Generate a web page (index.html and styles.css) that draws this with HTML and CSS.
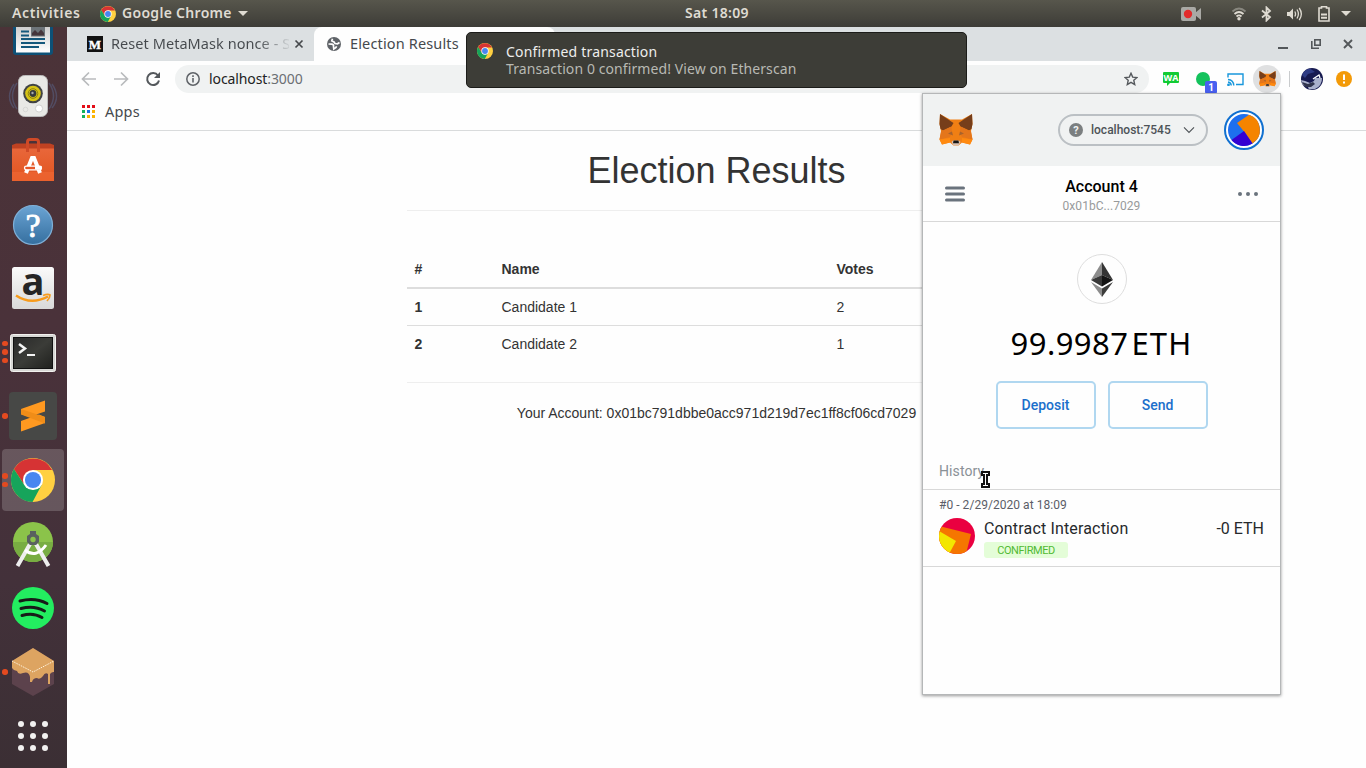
FILE: index.html
```html
<!DOCTYPE html>
<html lang="en">
<head>
<meta charset="utf-8">
<title>Election Results</title>
<link rel="stylesheet" href="styles.css">
</head>
<body>
<svg class="defs" width="0" height="0" aria-hidden="true">
  <defs>
    <linearGradient id="paper" x1="0" y1="0" x2="0" y2="1"><stop offset="0" stop-color="#aaa"/><stop offset="1" stop-color="#fff"/></linearGradient>
    <linearGradient id="bag" x1="0" y1="0" x2="0" y2="1"><stop offset="0" stop-color="#e9693d"/><stop offset="1" stop-color="#e2541f"/></linearGradient>
    <linearGradient id="help" x1="0" y1="0" x2="0" y2="1"><stop offset="0" stop-color="#6ba4d4"/><stop offset="1" stop-color="#356f9f"/></linearGradient>
    <linearGradient id="white" x1="0" y1="0" x2="0" y2="1"><stop offset="0" stop-color="#fafafa"/><stop offset="1" stop-color="#d9d9d9"/></linearGradient>
    <linearGradient id="term" x1="0" y1="0" x2="1" y2="1"><stop offset="0" stop-color="#292929"/><stop offset=".5" stop-color="#3b3c38"/><stop offset="1" stop-color="#1f201d"/></linearGradient>
    <clipPath id="tx-circle"><circle cx="18" cy="18" r="18"/></clipPath>
    <symbol id="chrome" viewBox="0 0 48 48">
      <circle cx="24" cy="24" r="24" fill="#ffd041"/>
      <path d="M3.2 12A24 24 0 0 1 44.8 13.2H24L14.6 29.4z" fill="#d63334"/>
      <path d="M3.2 12A24 24 0 0 0 23.5 48L33.4 29.4 24 34.8 14.6 29.4z" fill="#16a45b"/>
      <circle cx="24" cy="24" r="11" fill="#fff"/><circle cx="24" cy="24" r="8.8" fill="#4886f0"/>
    </symbol>
    <symbol id="fox" viewBox="0 0 34 32">
      <path d="M1 0L11 5.500H23L33 0 33.500 10 32 17 33.500 25.500 31 30.500 23 28.500 19.500 31.500H14.500L11 28.500 3 30.500 .5 25.500 2 17 .5 10z" fill="#f07f14"/>
      <path d="M1 0L14.500 9 12.500 12.500 4 16.500 1.500 15 .5 10zM33 0L19.500 9 21.500 12.500 30 16.500 32.500 15 33.500 10z" fill="#763e1a"/>
      <path d="M2.500 16L4 16.500 12.500 12.500 13 19 11 23 .5 25.500zM31.500 16L30 16.500 21.500 12.500 21 19 23 23 33.500 25.500z" fill="#e4761b"/>
      <path d="M9 19.500L13 17.500 14 21.500zM25 19.500L21 17.500 20 21.500z" fill="#a9632c"/>
      <path d="M.5 25.500L11 24 11 28.500 3 30.500zM33.500 25.500L23 24 23 28.500 31 30.500z" fill="#ff8a10"/>
      <path d="M12.500 28L14 26.500H20L21.500 28 19.500 31.500H14.500z" fill="#d7c1b3"/>
      <path d="M14.500 26.500H19.500L20 29.300H14z" fill="#161616"/>
    </symbol>
  </defs>
</svg>

<header class="panel">
  <span class="panel-activities">Activities</span>
  <span class="panel-app"><svg width="16" height="16"><use href="#chrome"/></svg><b>Google Chrome</b><i class="caret"></i></span>
  <span class="panel-clock">Sat 18:09</span>
  <div class="tray">
    <svg width="21" height="14" viewBox="0 0 21 14"><rect width="15" height="14" rx="2" fill="#a9a9a5"/><path d="M14 6L20 1V13L14 8z" fill="#a9a9a5"/><circle cx="7" cy="7" r="4.200" fill="#e22b2b"/></svg>
    <svg class="wifi" width="16" height="14" viewBox="0 0 16 14" fill="none" stroke-width="1.800"><path d="M1.500 4.500Q8-1.500 14.500 4.500" stroke="#88877f"/><path d="M3.500 7Q8 3 12.500 7M5.500 9.500Q8 7.300 10.500 9.500" stroke="#dfdbd2"/><circle cx="8" cy="11.800" r="1.700" fill="#dfdbd2"/></svg>
    <svg class="bluetooth" width="11" height="16" viewBox="0 0 11 16" fill="none" stroke="#dfdbd2" stroke-width="1.800"><path d="M1 4.500L9 11 5.500 14.500V1.500L9 5 1 11.500"/></svg>
    <svg class="sound" width="17" height="14" viewBox="0 0 17 14"><path d="M1 5H3.500L7 1.500V12.500L3.500 9H1z" fill="#dfdbd2"/><path d="M8.800 4.500Q10.300 7 8.800 9.500M11 2.500Q13.800 7 11 11.500M13.200 1Q17.500 7 13.200 13" fill="none" stroke="#dfdbd2" stroke-width="1.300"/></svg>
    <svg class="battery" width="12" height="16" viewBox="0 0 12 16"><path d="M3.500 2V.8H8.500V2H11V15H1V2z" fill="none" stroke="#dfdbd2" stroke-width="1.600"/><path d="M3 8.500H9M3 11.800H9" stroke="#dfdbd2" stroke-width="2"/></svg>
    <i class="caret"></i>
  </div>
</header>

<div class="desktop">
  <nav class="dock">
    <div class="dock-list">
      <div class="slot"><svg width="40" height="48" viewBox="0 0 40 48"><rect width="40" height="47" rx="3" fill="#0d5177"/><rect x="3" width="34" height="44.500" fill="url(#paper)"/><path d="M8 23.500H16M8 27.500H16M8 31H32M8 35H32M8 39H26" stroke="#15587c" stroke-width="1.800"/><rect x="18" y="18" width="14" height="10.500" fill="#6d7479"/><path d="M19 27.500V25L22 22 25 25 28 21.500 31 25V27.500z" fill="#45353b"/></svg></div>
      <div class="slot"><svg width="48" height="48" viewBox="0 0 48 48"><path d="M8 11Q-1 24 8 37M40 11Q49 24 40 37M5 12Q-4 25 5 36M43 12Q52 25 43 36" fill="none" stroke="#5b6a95" stroke-width="1.500" opacity=".45"/><rect x="9.500" y="3.500" width="29" height="41" rx="6" fill="#e9e9e6" stroke="#bbb"/><circle cx="24" cy="21.500" r="9.800" fill="#404344"/><circle cx="24" cy="21.500" r="7.800" fill="#d7c415"/><circle cx="24" cy="21.500" r="4.800" fill="none" stroke="#8c8112"/><circle cx="24" cy="21.500" r="3.400" fill="#373a3e"/><circle cx="23.500" cy="21" r="1.200" fill="#aaa"/><circle cx="30" cy="36.500" r="3.600" fill="#fff" stroke="#d2d2d0"/><circle cx="16.500" cy="37.500" r="2.300" fill="none" stroke="#d8d8d6"/></svg></div>
      <div class="slot"><svg width="42" height="44" viewBox="0 0 42 44"><path d="M0 7H42V43H0z" fill="url(#bag)"/><path d="M0 7L4 5.500H38L42 7V10.500H0z" fill="#bf4222"/><path d="M15.500 14V4Q15.500 1.500 18 1.500H24Q26.500 1.500 26.500 4V14" fill="none" stroke="#cf4a27" stroke-width="3"/><path d="M0 34H42V43H0z" fill="#f26b38" opacity=".55"/><path d="M14 35L20 20H22L28 35" fill="none" stroke="#fff" stroke-width="4"/><rect x="12.500" y="28.200" width="17" height="3.600" rx="1.800" fill="#e65729" stroke="#fff" stroke-width="1.300"/><path d="M23 28H29.500V31.500H23z" fill="#fff"/></svg></div>
      <div class="slot nudge"><svg width="42" height="42" viewBox="0 0 42 42"><circle cx="21" cy="21" r="19.500" fill="url(#help)" stroke="#7fb0d8" stroke-width="1.200"/><text x="21" y="33" text-anchor="middle" class="glyph-help">?</text></svg></div>
      <div class="slot"><svg width="42" height="42" viewBox="0 0 42 42"><rect width="42" height="42" rx="2.500" fill="url(#white)"/><text x="21" y="27.500" text-anchor="middle" class="glyph-amazon">a</text><path d="M4 28.500Q19 38.500 36 29.500" fill="none" stroke="#f79b1c" stroke-width="2.500"/><path d="M31 28.500Q36 26.500 38 28 38 31 35 34" fill="none" stroke="#f79b1c" stroke-width="1.700"/></svg></div>
      <div class="slot nudge"><i class="dots"><b></b><b></b><b></b></i><svg width="46" height="38" viewBox="0 0 46 38"><rect x=".5" y=".5" width="45" height="37" rx="2" fill="#d7d7d4" stroke="#f2f2ef"/><rect x="3.500" y="3.500" width="39" height="31" fill="url(#term)" stroke="#111"/><path d="M9 10L15 14.500 9 19" fill="none" stroke="#f4f4f4" stroke-width="2.500"/><path d="M17 21H25" stroke="#f4f4f4" stroke-width="2"/></svg></div>
      <div class="slot"><i class="dots"><b></b></i><svg width="48" height="48" viewBox="0 0 48 48"><rect width="48" height="48" rx="4" fill="#474846"/><path d="M12 17L36 8.500V19.500L20 25 12 22z" fill="#ff9920"/><path d="M12 29L30 22.500 36 25V31L12 39.500z" fill="#ff9920"/><path d="M12 17L36 25V31.500L12 22.500z" fill="#f08d18"/></svg></div>
      <div class="slot active"><i class="dots"><b></b><b></b></i><svg width="44" height="44"><use href="#chrome"/></svg></div>
      <div class="slot"><svg width="42" height="46" viewBox="0 0 42 46"><circle cx="21" cy="21" r="20" fill="#8bc34a"/><path d="M1 21A20 20 0 0 0 41 21z" fill="#78ad42"/><path d="M18 23L5.500 45M24 23L36.500 45" stroke="#eee" stroke-width="4"/><path d="M13 29Q24 38 34 24" fill="none" stroke="#fff" stroke-width="3"/><path d="M18 10H24V13L27 15V21L24 24H18L15 21V15L18 13z" fill="#59615f"/><circle cx="21" cy="18.500" r="2.700" fill="#8bc34a"/></svg></div>
      <div class="slot"><svg width="42" height="42" viewBox="0 0 42 42"><circle cx="21" cy="21" r="21" fill="#23ed60"/><path d="M8 14Q23 10 35 16.500M9 21.500Q22 18 32.500 24M10 28.500Q21 25 30 30.500" fill="none" stroke="#171b18" stroke-linecap="round" stroke-width="3"/></svg></div>
      <div class="slot"><i class="dots"><b></b></i><svg width="42" height="48" viewBox="0 0 42 48"><path d="M0 13L21 0 42 13V36L21 48 0 36z" fill="#5c424c"/><path d="M0 13L21 0 42 13V24Q40 23.500 38 26V36H36V26Q33 24 31 28 28 32 25 30 21 30 20 34H18V29Q17 23 11 25 6 27 5 23 2 23 0 20z" fill="#dda461"/><path d="M0 13L21 24 42 13M21 0" fill="none" stroke="#fff2dc" stroke-dasharray="1.500 1"/></svg></div>
      <div class="slot"><svg width="32" height="32" viewBox="0 0 32 32" fill="#f2f1f0"><circle cx="4" cy="4" r="3"/><circle cx="16" cy="4" r="3"/><circle cx="28" cy="4" r="3"/><circle cx="4" cy="16" r="3"/><circle cx="16" cy="16" r="3"/><circle cx="28" cy="16" r="3"/><circle cx="4" cy="28" r="3"/><circle cx="16" cy="28" r="3"/><circle cx="28" cy="28" r="3"/></svg></div>
    </div>
  </nav>

  <main class="browser">
    <div class="tabstrip">
      <div class="tab tab-back">
        <svg width="16" height="16" viewBox="0 0 16 16"><rect width="16" height="16" fill="#111"/><text x="8" y="12.500" text-anchor="middle" class="glyph-medium">M</text></svg>
        <span class="tab-title tab-fade">Reset MetaMask nonce - S</span>
        <svg class="tab-close" width="10" height="10" viewBox="0 0 10 10"><path d="M1.500 1.500L8.500 8.500M8.500 1.500L1.500 8.500" stroke="#46494c" stroke-width="1.700"/></svg>
      </div>
      <div class="tab tab-front">
        <svg width="14" height="14" viewBox="0 0 14 14"><circle cx="7" cy="7" r="7" fill="#5f6368"/><path d="M1.500 7L4.500 7.200Q7 7.500 6.500 9.500L6.800 12 9 10.500 9.500 9.200M5.500 1.800L4.800 3.800 7 5 8 6.500 10.500 6.800 12.500 5.500" fill="none" stroke="#fefefe" stroke-width="1.700"/></svg>
        <span class="tab-title tab-title-front">Election Results</span>
      </div>
      <div class="window-buttons">
        <svg width="10" height="10" viewBox="0 0 10 10"><path d="M0 9H10" stroke="#53575a" stroke-width="2"/></svg>
        <svg width="10" height="10" viewBox="0 0 10 10" fill="none" stroke="#53575a"><rect x="3.800" y=".8" width="5.400" height="5.400" stroke-width="1.600"/><path d="M.8 2V9.200H8" stroke-width="1.600"/></svg>
        <svg width="10" height="10" viewBox="0 0 10 10"><path d="M1 1L9 9M9 1L1 9" stroke="#53575a" stroke-width="1.900"/></svg>
      </div>
    </div>

    <div class="toolbar">
      <div class="nav-buttons">
        <svg width="16" height="16" viewBox="0 0 16 16" fill="none" stroke="#b9bbbd" stroke-width="1.700"><path d="M15 8H2M8 1.500L1.500 8 8 14.500"/></svg>
        <svg width="16" height="16" viewBox="0 0 16 16" fill="none" stroke="#b9bbbd" stroke-width="1.700"><path d="M1 8H14M8 1.500L14.500 8 8 14.500"/></svg>
        <svg width="16" height="16" viewBox="0 0 16 16"><path d="M13 4.500A6 6 0 1 0 14 9.500" fill="none" stroke="#54585c" stroke-width="2"/><path d="M15 1V7H9z" fill="#54585c"/></svg>
      </div>
      <div class="omnibox">
        <svg width="14" height="14" viewBox="0 0 14 14"><circle cx="7" cy="7" r="6.200" fill="none" stroke="#5f6368" stroke-width="1.500"/><path d="M7 6V10.500M7 3.300V4.900" stroke="#5f6368" stroke-width="1.600"/></svg>
        <span class="url">localhost<em>:3000</em></span>
        <svg class="star" width="14" height="14" viewBox="0 0 14 14"><path d="M7 1.300L8.700 5.100 13 5.500 9.800 8.300 10.700 12.500 7 10.300 3.300 12.500 4.200 8.300 1 5.500 5.300 5.100z" fill="none" stroke="#54585c" stroke-width="1.400"/></svg>
      </div>
      <div class="extensions">
        <svg width="16" height="14" viewBox="0 0 16 14"><path d="M1 0H15Q16 0 16 1V10Q16 11 15 11H7L4 14V11H1Q0 11 0 10V1Q0 0 1 0z" fill="#12cb34"/><text x="8" y="8.800" text-anchor="middle" class="glyph-wa">WA</text></svg>
        <div class="hangouts"><span class="badge">1</span></div>
        <svg class="cast" width="17" height="13" viewBox="0 0 17 13" fill="none" stroke="#1897dc" stroke-width="1.400"><path d="M1 4.500V1H16V11.500H9M1 6.500Q6.500 7 6.800 12.500M1 9Q4 9.500 4.300 12.500"/><circle cx="1.500" cy="11.800" r=".7"/></svg>
        <div class="fox-button"><svg width="17" height="16"><use href="#fox"/></svg></div>
        <i class="divider"></i>
        <svg class="profile" width="22" height="22" viewBox="0 0 22 22"><circle cx="11" cy="11" r="11" fill="#171a50"/><path d="M1 7A11 11 0 0 1 9 .5L14 4 7 6 4 10z" fill="#2f3c84"/><path d="M0 12L4 13 9 15 13 13 14 10 21 10A11 11 0 0 1 14 21L8 21.500 7 19 2 17z" fill="#a9b0cc"/><path d="M1 14L7 16 12 14 14 16 10 19 5 19Q2 17 1 14z" fill="#30344d"/><path d="M12 11L18 7 19 10" fill="none" stroke="#fff" stroke-width="1.300"/></svg>
        <svg class="alert" width="16" height="16" viewBox="0 0 16 16"><circle cx="8" cy="8" r="8" fill="#f39a08"/><path d="M8 3.500V9M8 10.500V12.500" stroke="#fff" stroke-width="2"/></svg>
      </div>
    </div>

    <div class="bookmarks">
      <svg width="13" height="13" viewBox="0 0 13 13"><path d="M0 0h3v3H0zM5 0h3v3H5zM10 0h3v3h-3z" fill="#e30d17"/><path d="M0 5h3v3H0zM0 10h3v3H0z" fill="#14b25b"/><path d="M5 5h3v3H5z" fill="#1a73e8"/><path d="M10 5h3v3h-3zM5 10h3v3H5zM10 10h3v3h-3z" fill="#fbb300"/></svg>
      <span>Apps</span>
    </div>

    <section class="page">
      <h1>Election Results</h1>
      <hr>
      <br>
      <table>
        <thead><tr><th class="col-id">#</th><th class="col-name">Name</th><th>Votes</th></tr></thead>
        <tbody>
          <tr><th>1</th><td>Candidate 1</td><td>2</td></tr>
          <tr><th>2</th><td>Candidate 2</td><td>1</td></tr>
        </tbody>
      </table>
      <hr>
      <p>Your Account: 0x01bc791dbbe0acc971d219d7ec1ff8cf06cd7029</p>
    </section>
  </main>
</div>

<aside class="wallet">
  <div class="wallet-top">
    <svg width="34" height="32"><use href="#fox"/></svg>
    <div class="network">
      <svg width="14" height="14" viewBox="0 0 14 14"><circle cx="7" cy="7" r="7" fill="#7b7f80"/><text x="7" y="11" text-anchor="middle" class="glyph-q">?</text></svg>
      <span>localhost:7545</span>
      <svg width="12" height="8" viewBox="0 0 12 8"><path d="M1 1.300L6 6.500 11 1.300" fill="none" stroke="#4d5357" stroke-width="1.100"/></svg>
    </div>
    <svg class="identicon" width="40" height="40" viewBox="0 0 40 40"><circle cx="20" cy="20" r="19" fill="#fefefe" stroke="#1070d0" stroke-width="2"/><circle cx="20" cy="20" r="16" fill="#1d6fee"/><path d="M13 13L25 4.800A16 16 0 0 1 28.500 33.500L20 21.500z" fill="#f58400"/><path d="M20 21L28.500 33.500A16 16 0 0 1 7.500 30z" fill="#3400d2"/></svg>
  </div>
  <div class="account">
    <svg width="20" height="16" viewBox="0 0 20 16"><path d="M1.500 2H18.500M1.500 8H18.500M1.500 14H18.500" stroke="#6a737d" stroke-width="3" stroke-linecap="round"/></svg>
    <div class="account-name"><b>Account 4</b><span>0x01bC...7029</span></div>
    <svg width="20" height="4" viewBox="0 0 20 4" fill="#6a737d"><circle cx="2" cy="2" r="2"/><circle cx="10" cy="2" r="2"/><circle cx="18" cy="2" r="2"/></svg>
  </div>
  <div class="balance">
    <div class="eth-logo"><svg width="22" height="35" viewBox="0 0 22 35"><path d="M11 0L0 18 11 13z" fill="#8c8c8c"/><path d="M11 0L22 18 11 13z" fill="#343434"/><path d="M0 18L11 13V24.500z" fill="#393939"/><path d="M22 18L11 13V24.500z" fill="#141414"/><path d="M0 20L11 26.500V35z" fill="#8c8c8c"/><path d="M22 20L11 26.500V35z" fill="#3c3c3b"/></svg></div>
    <div class="amount"><span>99.9987</span><span class="unit">ETH</span></div>
    <div class="actions"><button>Deposit</button><button>Send</button></div>
  </div>
  <div class="history">History</div>
  <div class="transaction">
    <div class="tx-date">#0 - 2/29/2020 at 18:09</div>
    <div class="tx-row">
      <svg width="36" height="36" viewBox="0 0 36 36"><g clip-path="url(#tx-circle)"><rect width="36" height="36" fill="#ea0040"/><path d="M0 8L32 16 27 36H0z" fill="#f57600"/><path d="M0 13L17 23 10 36H0z" fill="#f3e600"/></g></svg>
      <div class="tx-text"><span class="tx-title">Contract Interaction</span><span class="tx-status">CONFIRMED</span></div>
      <span class="tx-amount">-0 ETH</span>
    </div>
  </div>
</aside>

<div class="notification">
  <svg width="16" height="16"><use href="#chrome"/></svg>
  <div class="note-text"><span class="note-title">Confirmed transaction</span><span class="note-body">Transaction 0 confirmed! View on Etherscan</span></div>
</div>

<svg class="cursor" width="9" height="17" viewBox="0 0 9 17" shape-rendering="crispEdges"><path d="M1 1H8V4H6V13H8V16H1V13H3V4H1z" fill="#fff" stroke="#111" stroke-width="2"/><path d="M2 2H7V3H5V14H7V15H2V14H4V3H2z" fill="#fff"/></svg>
</body>
</html>
```
FILE: styles.css
```css
* { box-sizing: border-box; }
body { margin: 0; width: 1366px; height: 768px; overflow: hidden; display: flex; flex-direction: column; position: relative; background: #fefefe; font-family: "Noto Sans", sans-serif; }
svg { display: block; flex: none; }
.defs { position: absolute; }

/* Top panel */
.panel { height: 27px; flex: none; display: grid; grid-template-columns: 100px 585px 64px 1fr; align-items: center; background: linear-gradient(#57564c, #3d3c37); color: #dfdbd2; font-size: 14px; font-weight: 600; white-space: nowrap; line-height: 25px; }
.panel-activities { padding: 0 0 2px 12px; letter-spacing: .6px; }
.panel-app { display: flex; align-items: center; gap: 6px; }
.panel-app b { font-weight: 600; width: 110px; padding-bottom: 2px; letter-spacing: .3px; }
.caret { border: 5px solid transparent; border-top-color: #dfdbd2; border-bottom: 0; }
.panel-clock { letter-spacing: .3px; padding-bottom: 2px; }
.tray { display: flex; align-items: center; justify-content: flex-end; padding-right: 15px; }
.wifi { margin-left: 29px; }
.bluetooth { margin-left: 14px; }
.sound { margin-left: 14px; }
.battery { margin-left: 15px; }
.tray .caret { margin-left: 11px; }

.desktop { flex: 1; min-height: 0; display: flex; }

/* Dock */
.dock { width: 67px; flex: none; overflow: hidden; background: linear-gradient(#4b3338, #4a323a 40%, #43313a 75%, #3b2f34); }
.dock-list { margin-top: -27px; }
.slot { width: 66px; height: 64px; display: flex; align-items: center; justify-content: center; position: relative; }
.slot.nudge { padding-top: 2px; }
.slot.active::before { content: ""; position: absolute; inset: 1px 2px; background: #ffffff2e; border-radius: 4px; }
.slot svg { position: relative; overflow: visible; }
.dots { position: absolute; left: 2px; top: 0; bottom: 0; display: flex; flex-direction: column; gap: 3px; justify-content: center; }
.dots b { width: 5.500px; height: 5.500px; border-radius: 50%; background: #e44a20; }
.glyph-help { font: 34px "Liberation Serif", serif; fill: #fff; stroke: #fff; stroke-width: .8px; }
.glyph-amazon { font: bold 38px "Open Sans", sans-serif; fill: #252525; }

/* Browser chrome */
.browser { flex: 1; min-width: 0; display: flex; flex-direction: column; }
.tabstrip { height: 34px; display: flex; background: #dce0e2; color: #45494d; }
.tab { display: flex; align-items: center; height: 34px; }
.tab-back { width: 247px; padding-left: 20px; border-bottom-right-radius: 8px; background: #dce0e2; }
.tab-title { font-size: 14.500px; white-space: nowrap; margin-left: 8px; padding-bottom: 2px; }
.tab-title-front { letter-spacing: .15px; margin-left: 9px; }
.tab-fade { width: 178px; overflow: hidden; color: transparent; letter-spacing: .06px; background: linear-gradient(90deg, #45494d 82%, #dce0e2 102%); background-clip: text; }
.tab-close { margin-left: 5px; }
.tab-front { width: 241px; padding-left: 13px; border-radius: 8px 8px 0 0; background: #fefefe; }
.window-buttons { margin-left: auto; display: flex; align-items: center; gap: 22px; padding-right: 13px; }
.window-buttons svg:first-child { margin-right: 1px; }
.toolbar { height: 36px; display: flex; align-items: center; }
.nav-buttons { display: flex; gap: 16px; padding-left: 14px; width: 108px; }
.omnibox { width: 974px; height: 28px; border-radius: 14px; background: #f0f2f2; display: flex; align-items: center; padding: 0 11px; }
.url { font-size: 14px; margin-left: 9px; padding-bottom: 2px; letter-spacing: -.1px; color: #222; }
.url em { color: #6b6f73; font-style: normal; }
.star { margin-left: auto; }
.extensions { display: flex; align-items: center; padding-left: 14px; }
.hangouts { position: relative; width: 14px; height: 14px; border-radius: 50%; background: #14c25c; margin-left: 17px; }
.badge { position: absolute; left: 9px; top: 9px; width: 12px; height: 13px; border-radius: 2px; background: #4860f0; color: #fff; font: bold 10px/13px Roboto, sans-serif; text-align: center; }
.cast { margin-left: 17px; }
.fox-button { width: 28px; height: 28px; margin-left: 9px; border-radius: 50%; background: #dfe0e1; display: grid; place-items: center; }
.divider { width: 1px; height: 16px; margin-left: 8px; background: #c9cbcd; }
.profile { margin-left: 11px; }
.alert { margin-left: 13px; }
.glyph-wa { font: bold 9px "Open Sans", sans-serif; fill: #fff; }
.glyph-medium { font: bold 13px "Liberation Serif", serif; fill: #fff; stroke: #fff; stroke-width: .4px; }
.bookmarks { height: 34px; display: flex; align-items: center; padding: 0 0 3px 15px; gap: 10px; font-size: 14.500px; color: #45494d; border-bottom: 1px solid #d9dbdc; }
.bookmarks svg { margin-bottom: 1px; }
.bookmarks span { padding-bottom: 2px; letter-spacing: .2px; }

/* Page */
.page { width: 620px; margin: 19px auto 0; font: 14px/20px "Liberation Sans", sans-serif; color: #333; }
h1 { margin: 0; padding-top: 1px; height: 40px; font-size: 36px; font-weight: 500; line-height: 40px; text-align: center; }
hr { margin: 20px 0; border: 0; border-top: 1px solid #eee; }
table { width: 100%; border-collapse: collapse; margin-bottom: 20px; }
th, td { padding: 8px; text-align: left; border-top: 1px solid #ddd; }
thead th { border-top: 0; border-bottom: 2px solid #ddd; }
.col-id { width: 87px; }
.col-name { width: 335px; }
p { margin: 0; text-align: center; }

/* Wallet popup */
.wallet { position: absolute; left: 922px; top: 93px; width: 359px; height: 602px; background: #fefefe; border: 1px solid #b5b7b8; box-shadow: 0 1px 3px #0006; font-family: Roboto, sans-serif; }
.wallet-top { height: 72px; display: flex; align-items: center; padding: 0 16px; background: #f0f2f2; }
.network { margin-left: 85px; width: 150px; height: 32px; border: 2px solid #bbc0c4; border-radius: 16px; display: flex; align-items: center; padding-left: 9px; gap: 8px; color: #4d5357; font-size: 12px; font-weight: 500; }
.network span { width: 84px; }
.glyph-q { font: bold 11px Roboto, sans-serif; fill: #f0f2f2; }
.identicon { margin-left: auto; }
.account { height: 56px; border-bottom: 1px solid #d8d8d8; display: flex; align-items: center; justify-content: space-between; padding: 0 22px; }
.account-name { display: flex; flex-direction: column; align-items: center; padding-top: 5px; color: #000; line-height: 19px; font-size: 12px; }
.account-name b { font-size: 16px; font-weight: 500; }
.account-name span { color: #989a9b; letter-spacing: .05px; line-height: 21px; margin-bottom: -2px; }
.balance { height: 229px; padding-top: 32px; display: flex; flex-direction: column; align-items: center; }
.eth-logo { width: 50px; height: 50px; border: 1px solid #dedede; border-radius: 50%; display: grid; place-items: center; }
.amount { margin-top: 17px; height: 45px; display: flex; gap: 3px; font: 31px/45px "Noto Sans", sans-serif; letter-spacing: .45px; color: #000; }
.unit { letter-spacing: 1.200px; }
.actions { display: flex; gap: 12px; margin-top: 15px; }
button { width: 100px; height: 48px; border: 2px solid #b0d7f0; border-radius: 5px; background: #fefefe; color: #1b6fcb; font: 500 14px Roboto, sans-serif; padding: 0; }
.history { height: 39px; padding: 11px 16px 0; border-bottom: 1px solid #d8d8d8; font-size: 14px; line-height: 18px; letter-spacing: .1px; color: #8a9197; }
.transaction { height: 77px; padding: 8px 16px 0; border-bottom: 1px solid #d8d8d8; }
.tx-date { font-size: 12px; line-height: 14px; letter-spacing: .04px; color: #5b5d67; }
.tx-row { display: flex; margin-top: 6px; }
.tx-text { display: flex; flex-direction: column; align-items: flex-start; margin-left: 9px; }
.tx-title, .tx-amount { padding-top: 1px; font-size: 16px; line-height: 20px; color: #26292c; }
.tx-title { letter-spacing: .16px; }
.tx-amount { margin-left: auto; }
.tx-status { width: 84px; height: 16px; margin-top: 3px; border-radius: 3px; background: #e4fdd8; color: #51ba33; font-size: 11px; line-height: 17px; letter-spacing: -.45px; text-align: center; }

/* Notification */
.notification { position: absolute; left: 466px; top: 32px; width: 501px; height: 56px; background: #3d3d37; border: 1px solid #1c1c19; border-radius: 5px; display: flex; padding: 10px 10px 0; color: #eeeeec; white-space: nowrap; }
.note-text { display: flex; flex-direction: column; margin-left: 13px; font-size: 14px; line-height: 17px; }
.note-title { letter-spacing: .18px; }
.note-body { color: #b8b9b3; letter-spacing: .09px; }
.cursor { position: absolute; left: 981px; top: 471px; }
```
